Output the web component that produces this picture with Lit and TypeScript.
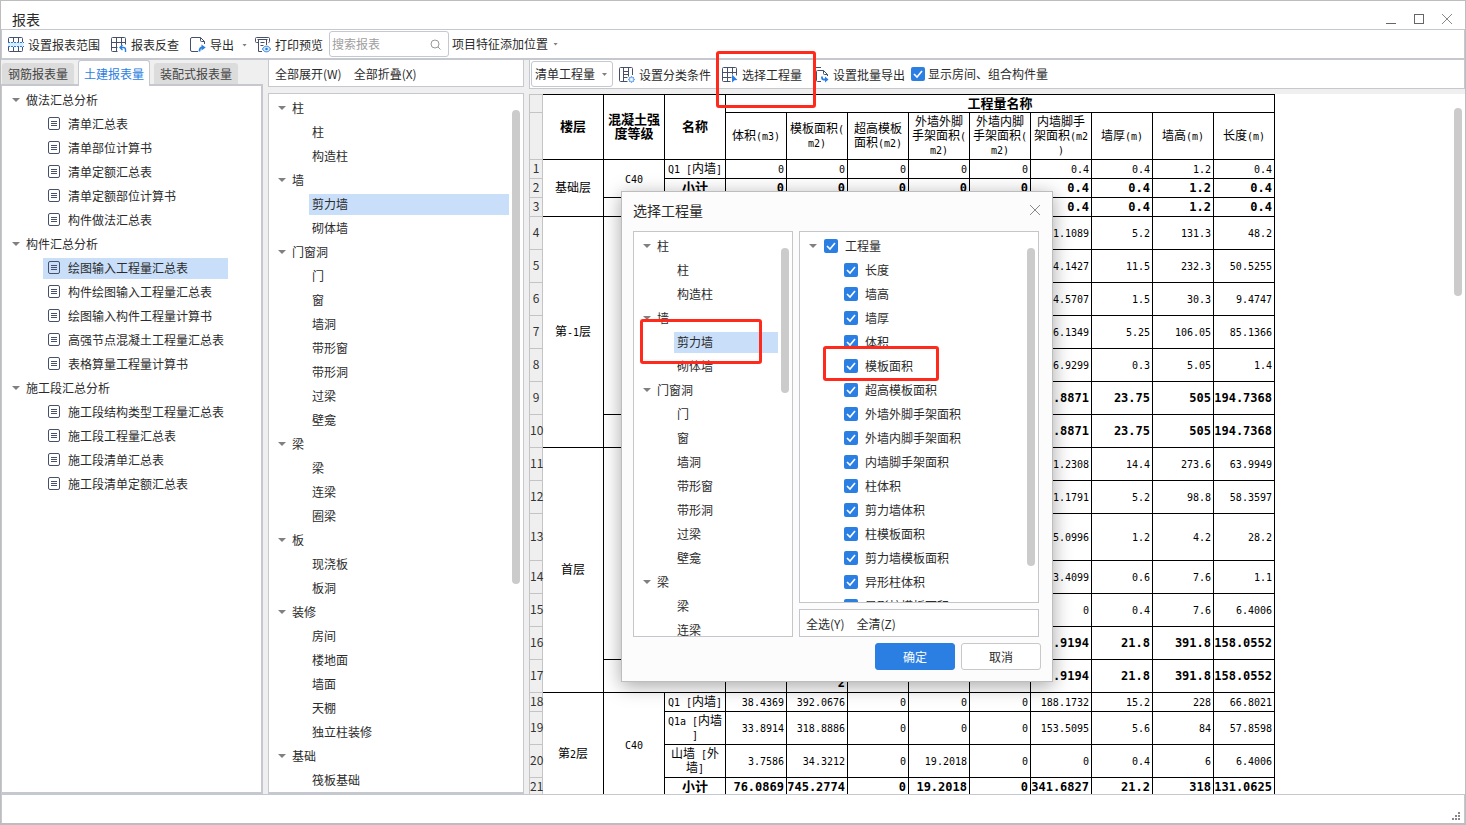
import { LitElement, html, css, svg, nothing, TemplateResult } from "lit";
import { customElement, property } from "lit/decorators.js";
import { classMap } from "lit/directives/class-map.js";

interface Group {
  name: string;
  items: string[];
}

const REPORTS: Group[] = [
  { name: "做法汇总分析", items: ["清单汇总表", "清单部位计算书", "清单定额汇总表", "清单定额部位计算书", "构件做法汇总表"] },
  {
    name: "构件汇总分析",
    items: ["绘图输入工程量汇总表", "构件绘图输入工程量汇总表", "绘图输入构件工程量计算书", "高强节点混凝土工程量汇总表", "表格算量工程量计算书"],
  },
  { name: "施工段汇总分析", items: ["施工段结构类型工程量汇总表", "施工段工程量汇总表", "施工段清单汇总表", "施工段清单定额汇总表"] },
];

const COMPONENTS: Group[] = [
  { name: "柱", items: ["柱", "构造柱"] },
  { name: "墙", items: ["剪力墙", "砌体墙"] },
  { name: "门窗洞", items: ["门", "窗", "墙洞", "带形窗", "带形洞", "过梁", "壁龛"] },
  { name: "梁", items: ["梁", "连梁", "圈梁"] },
  { name: "板", items: ["现浇板", "板洞"] },
  { name: "装修", items: ["房间", "楼地面", "墙面", "天棚", "独立柱装修"] },
  { name: "基础", items: ["筏板基础"] },
];

const DIALOG_COMPONENTS: Group[] = [
  ...COMPONENTS.slice(0, 3),
  { name: "梁", items: ["梁", "连梁"] },
];

const QUANTITIES = [
  "长度", "墙高", "墙厚", "体积", "模板面积", "超高模板面积", "外墙外脚手架面积", "外墙内脚手架面积",
  "内墙脚手架面积", "柱体积", "剪力墙体积", "柱模板面积", "剪力墙模板面积", "异形柱体积", "异形柱模板面积",
];

const HEADERS = [
  "体积(m3)", "模板面积(|m2)", "超高模板|面积(m2)", "外墙外脚|手架面积(|m2)", "外墙内脚|手架面积(|m2)",
  "内墙脚手|架面积(m2|)", "墙厚(m)", "墙高(m)", "长度(m)",
];

interface Row {
  size: "s" | "m" | "l";
  floor?: [string, number];
  grade?: [string, number];
  name: string;
  total?: "grade" | "floor";
  v: string[];
}

const ROWS: Row[] = [
  { size: "s", floor: ["基础层", 3], grade: ["C40", 2], name: "Q1 [内墙]", v: ["0", "0", "0", "0", "0", "0.4", "0.4", "1.2", "0.4"] },
  { size: "s", name: "小计", total: "grade", v: ["0", "0", "0", "0", "0", "0.4", "0.4", "1.2", "0.4"] },
  { size: "s", name: "", total: "floor", v: ["", "", "", "", "", "0.4", "0.4", "1.2", "0.4"] },
  { size: "m", floor: ["第-1层", 7], grade: ["", 6], name: "", v: ["", "", "", "", "", "1.1089", "5.2", "131.3", "48.2"] },
  { size: "m", name: "", v: ["", "", "", "", "", "4.1427", "11.5", "232.3", "50.5255"] },
  { size: "m", name: "", v: ["", "", "", "", "", "4.5707", "1.5", "30.3", "9.4747"] },
  { size: "m", name: "", v: ["", "", "", "", "", "6.1349", "5.25", "106.05", "85.1366"] },
  { size: "m", name: "", v: ["", "", "", "", "", "6.9299", "0.3", "5.05", "1.4"] },
  { size: "m", name: "", total: "grade", v: ["", "", "", "", "", ".8871", "23.75", "505", "194.7368"] },
  { size: "m", name: "", total: "floor", v: ["", "", "", "", "", ".8871", "23.75", "505", "194.7368"] },
  { size: "m", floor: ["首层", 7], grade: ["", 6], name: "", v: ["", "", "", "", "", "1.2308", "14.4", "273.6", "63.9949"] },
  { size: "m", name: "", v: ["", "", "", "", "", "1.1791", "5.2", "98.8", "58.3597"] },
  { size: "l", name: "", v: ["", "", "", "", "", "5.0996", "1.2", "4.2", "28.2"] },
  { size: "m", name: "", v: ["", "", "", "", "", "3.4099", "0.6", "7.6", "1.1"] },
  { size: "m", name: "", v: ["", "", "", "", "", "0", "0.4", "7.6", "6.4006"] },
  { size: "m", name: "", total: "grade", v: ["", "", "", "", "", ".9194", "21.8", "391.8", "158.0552"] },
  { size: "m", name: "", total: "floor", v: ["", "|2", "", "", "", ".9194", "21.8", "391.8", "158.0552"] },
  { size: "s", floor: ["第2层", 5], grade: ["C40", 4], name: "Q1 [内墙]", v: ["38.4369", "392.0676", "0", "0", "0", "188.1732", "15.2", "228", "66.8021"] },
  { size: "m", name: "Q1a [内墙|]", v: ["33.8914", "318.8886", "0", "0", "0", "153.5095", "5.6", "84", "57.8598"] },
  { size: "m", name: "山墙 [外|墙]", v: ["3.7586", "34.3212", "0", "19.2018", "0", "0", "0.4", "6", "6.4006"] },
  { size: "s", name: "小计", total: "grade", v: ["76.0869", "745.2774", "0", "19.2018", "0", "341.6827", "21.2", "318", "131.0625"] },
  { size: "s", name: "", total: "floor", v: ["", "", "", "", "", "", "", "", ""] },
];

/** Splits a cell text at "|" into lines and sets Latin runs in the monospace face. */
const cellText = (text: string) =>
  text.split("|").map((line, i) => html`${i ? html`<br />` : nothing}${line
    .split(/([\x21-\x7e ]+)/)
    .filter((p) => p)
    .map((p) => (/^[\x20-\x7e]/.test(p) ? html`<span class="mono">${p}</span>` : p))}`);

const icon = (body: TemplateResult | unknown) =>
  html`<svg class="icon" width="16" height="16" viewBox="0 0 16 16" fill="none" stroke="#46506a" stroke-width="1" aria-hidden="true">${body}</svg>`;

const ICONS = {
  range: icon(svg`
    <rect x="0.5" y="0.5" width="14" height="14" rx="1"/>
    <path d="M5.5 .5v14M10.5 .5v14"/>
    <rect x="0" y="5" width="15.5" height="5" fill="#d9ebfd" stroke="none"/>
    <path d="M0 5.5h16M0 9.5h16" stroke="#2b7ee2" stroke-dasharray="2 1"/>`),
  check: icon(svg`
    <path d="M6.5 14.5h-5a1 1 0 0 1-1-1v-12a1 1 0 0 1 1-1h12a1 1 0 0 1 1 1v6M5.5 .5v14M10.5 .5v8M.5 5.5h14M.5 10.5h6"/>
    <path d="M14.5 15v-2.5a2 2 0 0 0-2-2H9M11.5 8L9 10.5l2.5 2.5" stroke="#2b7ee2" stroke-width="1.4"/>`),
  export: icon(svg`
    <path d="M8 14.5H2A1.5 1.5 0 0 1 .5 13V2A1.5 1.5 0 0 1 2 .5h8.500l4 4V7M10.500 .5v3a1 1 0 0 0 1 1h3"/>
    <path d="M9.500 14.500c0-3 1-4.200 3-4.200" stroke="#2b7ee2" stroke-width="1.800"/>
    <path d="M11.500 7.500l4.200 3-4.200 3z" fill="#2b7ee2" stroke="none"/>`),
  preview: icon(svg`
    <path d="M3 5.500H1.500a1 1 0 0 1-1-1v-3a1 1 0 0 1 1-1h12a1 1 0 0 1 1 1v3a1 1 0 0 1-1 1M2.500 2.500h10M3.500 2.500v12H7M11.500 2.500V8M5.500 5.500h4M5.500 8.500h3"/>
    <path d="M7.500 12c1-2 2.400-2.800 4-2.800s3 .800 4 2.800c-1 2-2.400 2.800-4 2.800s-3-.800-4-2.800z" stroke="#2b7ee2" fill="#dcecfc"/>
    <circle cx="11.500" cy="12" r="1.300" fill="#2b7ee2" stroke="none"/>`),
  classify: icon(svg`
    <path d="M8.500 14.500h-7a1 1 0 0 1-1-1v-12a1 1 0 0 1 1-1h11a1 1 0 0 1 1 1V8M4.500 .500v14M9.500 .500v9M4.500 4.500h5M4.500 7.500h5M4.500 10.500h4"/>
    <circle cx="12.500" cy="12.500" r="2.500" stroke="#6fa8ec" fill="#cfe5fb"/>
    <path d="M12.500 9v1.500M12.500 14.500V16M9 12.500h1.500M14.500 12.500H16M10 10l1 1M14 14l1 1M15 10l-1 1M11 14l-1 1" stroke="#6fa8ec"/>
    <circle cx="12.500" cy="12.500" r="1" fill="#fff" stroke="none"/>`),
  select: icon(svg`
    <path d="M8.500 14.500h-7a1 1 0 0 1-1-1v-12a1 1 0 0 1 1-1h12a1 1 0 0 1 1 1v7M5.500 .500v14M10.500 .500v7M.500 5.500h14M.500 10.500h9"/>
    <path d="M10 7.500l5.500 5.500-3 .200-2.500 2.300z" fill="#2b7ee2" stroke="none"/>`),
  batch: icon(svg`
    <path d="M.500 11V1.500a1 1 0 0 1 1-1H8"/>
    <path d="M8 14.500H4.500a1 1 0 0 1-1-1v-9a1 1 0 0 1 1-1h6l4 4V9M10.500 3.500v3a1 1 0 0 0 1 1h3"/>
    <path d="M9 9.500v1.500c0 1 .500 1.500 1.500 1.500H12" stroke="#2b7ee2" stroke-width="1.800"/>
    <path d="M12 9.500l3.500 3-3.500 3z" fill="#2b7ee2" stroke="none"/>`),
};

const docIcon = html`<svg class="doc" width="14" height="14" viewBox="0 0 14 14" fill="none" stroke="#46506a" aria-hidden="true">
  <rect x="0.5" y="0.5" width="11" height="12" rx="1.5" />
  <path d="M3 4.500h6M3 6.500h6M3 8.500h6" />
</svg>`;

const shared = css`
  *,
  *::before,
  *::after {
    box-sizing: border-box;
  }
  button,
  input,
  select {
    margin: 0;
    padding: 0;
    border: 0;
    background: none;
    font: inherit;
    color: inherit;
  }
  ul {
    list-style: none;
    margin: 0;
    padding: 0;
  }
  .caret {
    flex: none;
    width: 8px;
    height: 4px;
    background: #808080;
    clip-path: polygon(0 0, 100% 0, 50% 100%);
  }
  input[type="checkbox"] {
    flex: none;
    appearance: none;
    width: 14px;
    height: 14px;
    border-radius: 2px;
    border: 1px solid #b0b5bd;
    background: #fff;
  }
  input[type="checkbox"]:checked {
    border: 0;
    background: #2b7ee2
      url("data:image/svg+xml,%3Csvg xmlns='http://www.w3.org/2000/svg' viewBox='0 0 14 14'%3E%3Cpath d='M3 7l3 3 5-6' fill='none' stroke='%23fff' stroke-width='1.6'/%3E%3C/svg%3E");
  }
  .thumb {
    position: absolute;
    width: 8px;
    border-radius: 4px;
    background: #cbcbcb;
  }
`;

@customElement("item-tree")
export class ItemTree extends LitElement {
  @property({ attribute: false }) groups: Group[] = [];
  @property() selected = "";
  @property({ type: Boolean }) docs = false;

  static styles = [
    shared,
    css`
      :host {
        display: block;
      }
      .head,
      .leaf {
        display: flex;
        align-items: center;
        height: 24px;
        width: 100%;
        white-space: nowrap;
        text-align: left;
      }
      .head {
        gap: 6px;
        padding-left: 7px;
      }
      .leaf {
        height: 21px;
        margin: 2px 0 1px;
        padding: 0 4px 1px 3px;
      }
      li > ul {
        padding: 0 0 0 38px;
        display: flow-root;
      }
      li > ul > li {
        display: flow-root;
      }
      .leaf.on {
        background: #c9dff9;
      }
      .docs {
        width: max-content;
      }
      .docs .head {
        padding-left: 10px;
      }
      .docs li > ul {
        padding-left: 41px;
      }
      .docs .leaf {
        gap: 6px;
        padding-left: 5px;
      }
      .doc {
        flex: none;
      }
    `,
  ];

  render() {
    return html`<ul class=${classMap({ docs: this.docs })}>
      ${this.groups.map(
        (g) => html`<li>
          <button class="head"><span class="caret"></span>${g.name}</button>
          <ul>
            ${g.items.map(
              (it) => html`<li>
                <button class=${classMap({ leaf: true, on: it === this.selected })}>${this.docs ? docIcon : nothing}${it}</button>
              </li>`,
            )}
          </ul>
        </li>`,
      )}
    </ul>`;
  }
}

@customElement("quantity-table")
export class QuantityTable extends LitElement {
  static styles = [
    shared,
    css`
      :host {
        display: block;
        color: #000;
      }
      table {
        table-layout: fixed;
        width: 746px;
        border-collapse: separate;
        border-spacing: 0;
        font-size: 12px;
        line-height: 14px;
      }
      .c-num {
        width: 14px;
      }
      th,
      td {
        padding: 0 0 2px;
        border: solid #000;
        border-width: 0 1px 1px 0;
        text-align: center;
        vertical-align: middle;
        font-weight: normal;
        white-space: nowrap;
      }
      thead tr:first-child > * {
        height: 19px;
        border-top-width: 1px;
      }
      thead tr:last-child > * {
        height: 47px;
      }
      .s > * {
        height: 19px;
      }
      .m > * {
        height: 33px;
      }
      .l > * {
        height: 47px;
      }
      .gutter {
        border-color: #c4c4c4;
        border-left-width: 1px;
        background: #efefef;
        color: #333;
      }
      .mono {
        font-family: "DejaVu Sans Mono", "Liberation Mono", monospace;
        font-size: 10px;
        line-height: 10px;
        white-space: pre;
      }
      .bold {
        font-weight: bold;
        font-size: 13px;
      }
      .bold .mono {
        font-size: 12px;
      }
      .num {
        text-align: right;
        padding-right: 2px;
      }
    `,
  ];

  render() {
    return html`<table>
      <colgroup>
        <col class="c-num" />
        ${Array.from({ length: 12 }, () => html`<col />`)}
      </colgroup>
      <thead>
        <tr>
          <td class="gutter"></td>
          <th class="bold" rowspan="2">楼层</th>
          <th class="bold" rowspan="2">${cellText("混凝土强|度等级")}</th>
          <th class="bold" rowspan="2">名称</th>
          <th class="bold" colspan="9">工程量名称</th>
        </tr>
        <tr>
          <td class="gutter"></td>
          ${HEADERS.map((h) => html`<th>${cellText(h)}</th>`)}
        </tr>
      </thead>
      <tbody>
        ${ROWS.map((r, i) => {
          const bold = !!r.total;
          return html`<tr class=${r.size}>
            <th class="gutter">${i + 1}</th>
            ${r.floor ? html`<td rowspan=${r.floor[1]}>${cellText(r.floor[0])}</td>` : nothing}
            ${r.grade ? html`<td rowspan=${r.grade[1]}>${cellText(r.grade[0])}</td>` : nothing}
            <td class=${classMap({ bold })} colspan=${r.total === "floor" ? 2 : 1}>${cellText(r.name)}</td>
            ${r.v.map((v) => html`<td class=${classMap({ num: true, bold })}>${cellText(v)}</td>`)}
          </tr>`;
        })}
      </tbody>
    </table>`;
  }
}

@customElement("quantity-dialog")
export class QuantityDialog extends LitElement {
  static styles = [
    shared,
    css`
      :host {
        display: flex;
        flex-direction: column;
        padding: 0 11px 11px;
        background: #fcfcfc;
        border: 1px solid #bdbdbd;
        box-shadow: 0 4px 18px rgba(0, 0, 0, 0.35);
      }
      header {
        display: flex;
        align-items: center;
        justify-content: space-between;
        height: 39px;
        padding-bottom: 3px;
        font-size: 14px;
      }
      .close {
        display: flex;
        padding: 6px 0 6px 6px;
      }
      .lists {
        position: relative;
        flex: 1;
        min-height: 0;
        display: grid;
        grid-template-columns: 160px 240px;
        gap: 6px;
      }
      .box {
        position: relative;
        border: 1px solid #c4c6ca;
        background: #fff;
        overflow: hidden;
        padding-top: 2px;
      }
      .left {
        padding: 2px 14px 0 2px;
      }
      .right {
        display: flex;
        flex-direction: column;
        gap: 6px;
        min-height: 0;
      }
      .checks {
        flex: 1;
        min-height: 0;
      }
      label {
        display: flex;
        align-items: center;
        gap: 7px;
        height: 24px;
        padding-left: 44px;
        white-space: nowrap;
      }
      .root {
        display: flex;
        align-items: center;
        gap: 7px;
        padding-left: 9px;
      }
      .root label {
        padding-left: 0;
      }
      .links {
        display: flex;
        align-items: center;
        gap: 12px;
        height: 28px;
        padding: 2px 6px 0;
      }
      footer {
        display: flex;
        justify-content: flex-end;
        gap: 6px;
        padding-top: 6px;
      }
      footer button {
        width: 80px;
        height: 27px;
        border: 1px solid #c8c8c8;
        border-radius: 3px;
        background: #fff;
      }
      footer .ok {
        border-color: #2b7ee2;
        background: #2b7ee2;
        color: #fff;
      }
      .t-left {
        right: 3px;
        top: 16px;
        height: 145px;
      }
      .t-right {
        right: 3px;
        top: 16px;
        height: 318px;
      }
      .mark {
        position: absolute;
        border: 3px solid #ff2a1b;
        border-radius: 3px;
        pointer-events: none;
      }
      .m-wall {
        left: 7px;
        top: 88px;
        width: 122px;
        height: 45px;
      }
      .m-form {
        left: 190px;
        top: 115px;
        width: 116px;
        height: 35px;
      }
    `,
  ];

  render() {
    return html`<header>
        <span>选择工程量</span>
        <button class="close" aria-label="关闭">
          <svg width="12" height="12" viewBox="0 0 12 12" stroke="#8a8a8a" fill="none"><path d="M1 1l10 10M11 1L1 11" /></svg>
        </button>
      </header>
      <div class="lists">
        <div class="box left">
          <item-tree .groups=${DIALOG_COMPONENTS} selected="剪力墙"></item-tree>
          <span class="thumb t-left"></span>
        </div>
        <div class="right">
          <div class="box checks">
            <div class="root">
              <span class="caret"></span>
              <label><input type="checkbox" checked />工程量</label>
            </div>
            ${QUANTITIES.map((q) => html`<label><input type="checkbox" checked />${q}</label>`)}
            <span class="thumb t-right"></span>
          </div>
          <div class="box links"><button>全选(Y)</button><button>全清(Z)</button></div>
        </div>
        <span class="mark m-wall"></span>
        <span class="mark m-form"></span>
      </div>
      <footer><button class="ok">确定</button><button>取消</button></footer>`;
  }
}

@customElement("app-root")
export class AppRoot extends LitElement {
  static styles = [
    shared,
    css`
      :host {
        position: relative;
        display: flex;
        flex-direction: column;
        box-sizing: border-box;
        height: 100vh;
        overflow: hidden;
        border: solid #bdbdbf;
        border-width: 1px 1px 2px;
        background: #fff;
        color: #2b2b2b;
        font: 12px/16px "Noto Sans CJK SC", "Liberation Sans", sans-serif;
      }
      .titlebar {
        flex: none;
        display: flex;
        align-items: center;
        justify-content: space-between;
        height: 28px;
        padding: 8px 12px 0 11px;
        font-size: 14px;
      }
      .controls {
        display: flex;
        gap: 16px;
      }
      .controls button {
        display: flex;
      }
      .toolbar {
        flex: none;
        display: flex;
        align-items: center;
        height: 31px;
        padding: 0 6px;
        border: 1px solid #c5c8ce;
        border-bottom-width: 2px;
        white-space: nowrap;
      }
      .tools {
        display: flex;
        align-items: center;
        gap: 11px;
        padding-top: 2px;
      }
      .tool {
        position: relative;
        display: flex;
        align-items: center;
        gap: 4px;
      }
      .icon {
        flex: none;
      }
      .small {
        width: 5px;
        height: 3px;
      }
      .menu {
        margin-right: -3px;
      }
      .menu .small {
        margin-left: 4px;
      }
      .search {
        display: flex;
        align-items: center;
        width: 120px;
        height: 26px;
        margin-left: 6px;
        padding: 0 7px 0 2px;
        border: 1px solid #c5c8ce;
        border-radius: 3px;
      }
      .search input {
        flex: 1;
        min-width: 0;
        outline: none;
      }
      .search input::placeholder {
        color: #a0a0a0;
        opacity: 1;
      }
      .feature {
        display: flex;
        align-items: center;
        gap: 5px;
        margin-left: 3px;
      }
      main {
        flex: 1;
        min-height: 0;
        display: grid;
        grid-template-columns: 262px 256px minmax(0, 1fr);
        grid-template-rows: minmax(0, 1fr);
        gap: 5px;
        background: #efefef;
      }
      .col {
        display: flex;
        flex-direction: column;
        min-width: 0;
        min-height: 0;
      }
      .tabs {
        display: flex;
        align-items: flex-end;
        gap: 4px;
        height: 24px;
        padding-left: 1px;
      }
      .tabs button {
        height: 21px;
        padding: 0 6px;
        border-radius: 3px 3px 0 0;
        background: #dcdcdc;
        color: #444;
      }
      .tabs .active {
        position: relative;
        height: 26px;
        margin-bottom: -2px;
        padding: 0 5px;
        border: 1px solid #c5c8ce;
        border-bottom: 0;
        background: #fff;
        color: #2b7ee2;
      }
      .panel {
        flex: 1;
        min-height: 0;
        padding-top: 2px;
        border: 2px solid #c5c8ce;
        border-left-width: 1px;
        background: #fff;
        overflow: hidden;
      }
      .bar {
        flex: none;
        display: flex;
        align-items: center;
        height: 27px;
        padding: 2px 6px 0;
        gap: 12px;
        border: 1px solid #c5c8ce;
        border-top: 0;
        background: #fff;
      }
      .middle {
        gap: 6px;
      }
      .middle .panel {
        position: relative;
        padding: 2px 14px 0 2px;
        border-width: 1px 1px 2px;
      }
      .content {
        gap: 5px;
      }
      .content .bar {
        height: 29px;
        padding: 0 1px;
        gap: 6px;
        white-space: nowrap;
      }
      .combo {
        position: relative;
        display: flex;
      }
      .combo select {
        appearance: none;
        width: 82px;
        height: 26px;
        padding: 0 16px 0 3px;
        border: 1px solid #c5c8ce;
        border-radius: 3px;
      }
      .combo .caret {
        position: absolute;
        right: 6px;
        top: 12px;
      }
      .show {
        display: flex;
        align-items: center;
        gap: 3px;
      }
      .sheet {
        position: relative;
        flex: 1;
        min-height: 0;
        overflow: hidden;
        background: #fff;
      }
      .t-tree {
        right: 3px;
        top: 16px;
        height: 474px;
      }
      .t-sheet {
        right: 3px;
        top: 14px;
        height: 188px;
      }
      .status {
        flex: none;
        display: flex;
        justify-content: flex-end;
        align-items: flex-end;
        height: 29px;
        padding: 0 1px 1px;
        border: 1px solid #c5c8ce;
        border-bottom: 0;
      }
      quantity-dialog {
        position: absolute;
        left: 620px;
        top: 190px;
        width: 432px;
        height: 491px;
      }
      .mark {
        position: absolute;
        left: -6px;
        top: -16px;
        width: 100px;
        height: 57px;
        border: 3px solid #ff2a1b;
        border-radius: 3px;
        pointer-events: none;
        z-index: 1;
      }
    `,
  ];

  render() {
    return html`
      <div class="titlebar">
        <span>报表</span>
        <div class="controls">
          <button aria-label="最小化">
            <svg width="12" height="12" viewBox="0 0 12 12" stroke="#666" fill="none"><path d="M1 10.500h10" /></svg>
          </button>
          <button aria-label="最大化">
            <svg width="12" height="12" viewBox="0 0 12 12" stroke="#666" fill="none"><rect x="1.500" y="1.500" width="9" height="9" /></svg>
          </button>
          <button aria-label="关闭">
            <svg width="12" height="12" viewBox="0 0 12 12" stroke="#888" fill="none"><path d="M1 1l10 10M11 1L1 11" /></svg>
          </button>
        </div>
      </div>

      <div class="toolbar">
        <div class="tools">
          <button class="tool">${ICONS.range}设置报表范围</button>
          <button class="tool">${ICONS.check}报表反查</button>
          <button class="tool menu">${ICONS.export}导出<span class="caret small"></span></button>
          <button class="tool">${ICONS.preview}打印预览</button>
        </div>
        <div class="search">
          <input type="text" placeholder="搜索报表" aria-label="搜索报表" />
          <svg width="11" height="11" viewBox="0 0 11 11" stroke="#999" fill="none"><circle cx="5" cy="5" r="4" /><path d="M8 8l2.500 2.500" /></svg>
        </div>
        <button class="feature">项目特征添加位置<span class="caret small"></span></button>
      </div>

      <main>
        <section class="col">
          <nav class="tabs">
            <button>钢筋报表量</button>
            <button class="active">土建报表量</button>
            <button>装配式报表量</button>
          </nav>
          <div class="panel">
            <item-tree .groups=${REPORTS} selected="绘图输入工程量汇总表" docs></item-tree>
          </div>
        </section>

        <section class="col middle">
          <div class="bar"><button>全部展开(W)</button><button>全部折叠(X)</button></div>
          <div class="panel">
            <item-tree .groups=${COMPONENTS} selected="剪力墙"></item-tree>
            <span class="thumb t-tree"></span>
          </div>
        </section>

        <section class="col content">
          <div class="bar">
            <div class="combo">
              <select aria-label="工程量类型"><option>清单工程量</option></select>
              <span class="caret small"></span>
            </div>
            <div class="tools">
              <button class="tool">${ICONS.classify}设置分类条件</button>
              <button class="tool">${ICONS.select}选择工程量<span class="mark"></span></button>
              <button class="tool">${ICONS.batch}设置批量导出</button>
            </div>
            <label class="show"><input type="checkbox" checked />显示房间、组合构件量</label>
          </div>
          <div class="sheet">
            <quantity-table></quantity-table>
            <span class="thumb t-sheet"></span>
          </div>
        </section>
      </main>

      <div class="status">
        <svg width="12" height="10" viewBox="0 0 12 10" fill="#85878b" aria-hidden="true">
          <path d="M7 0h2v2H7zM7 3h2v2H7zM4 3h2v2H4zM7 6h2v2H7zM4 6h2v2H4zM1 6h2v2H1z" />
        </svg>
      </div>

      <quantity-dialog role="dialog" aria-label="选择工程量"></quantity-dialog>
    `;
  }
}
